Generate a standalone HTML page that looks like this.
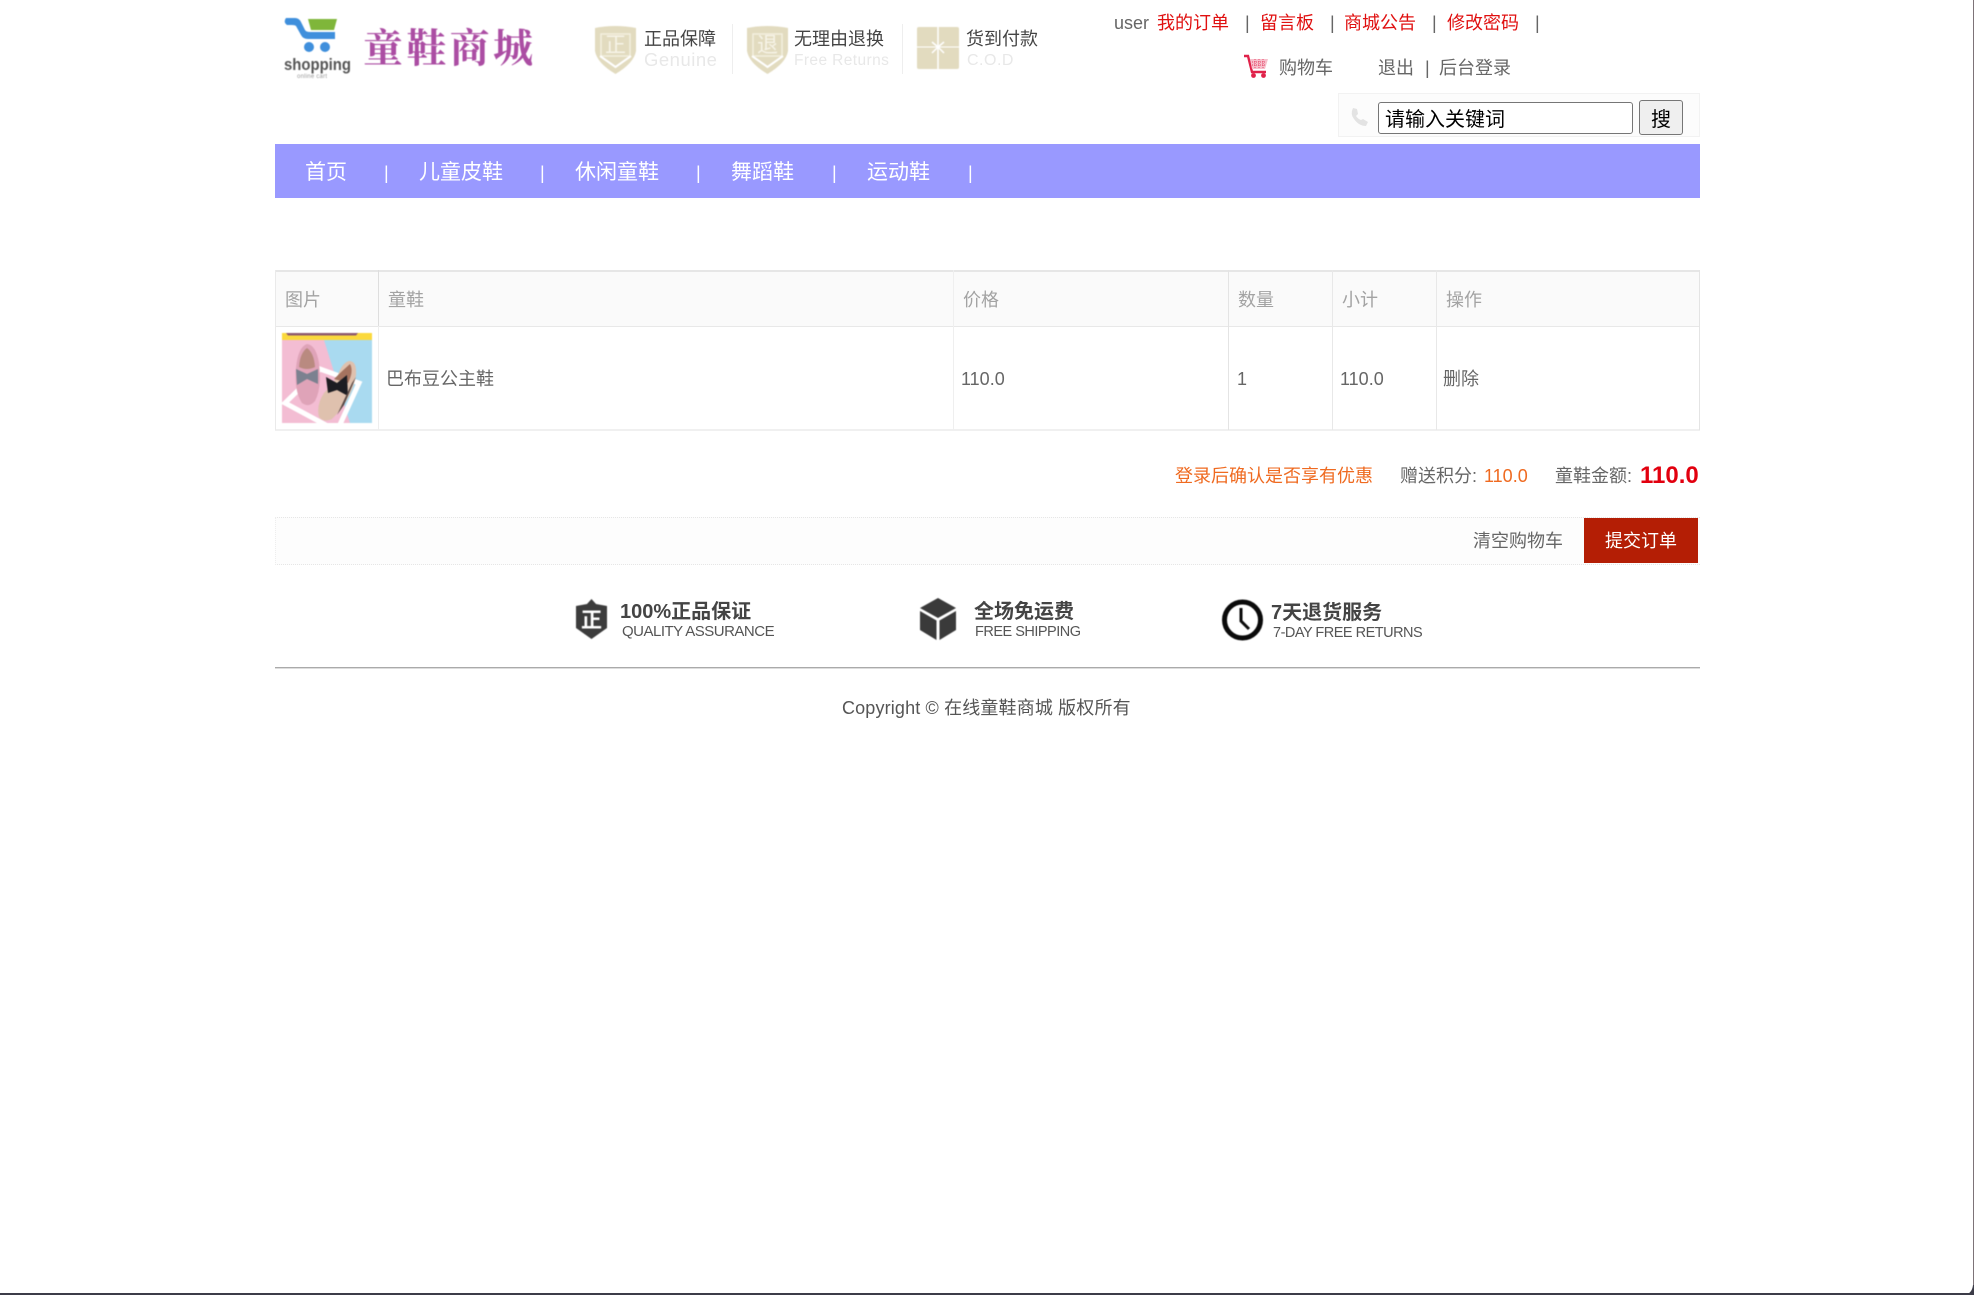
<!DOCTYPE html>
<html lang="zh-CN">
<head>
<meta charset="utf-8">
<title>童鞋商城</title>
<style>
html,body{margin:0;padding:0;background:#fff}
body{position:relative;width:1974px;height:1295px;overflow:hidden;font-family:"Liberation Sans","Noto Sans CJK SC",sans-serif;font-size:18px;color:#666}
.t{position:absolute;white-space:nowrap;line-height:24px;height:24px}
.r{color:#e01010}.w{color:#fff}.h{color:#a3a3a3}.o{color:#ef6a20}
.b{position:absolute;display:block}
svg{position:absolute;overflow:visible}
.soft{filter:blur(.4px)}
</style>
</head>
<body>
<!-- window frame -->
<div class="b" style="right:0;top:0;width:1px;height:1295px;background:#7d7378"></div>
<div class="b" style="left:0;bottom:0;width:1974px;height:2px;background:#3c3c48"></div>
<svg style="left:1960px;top:1281px" width="14" height="14" viewBox="0 0 14 14"><path d="M14 4V14H4Q12 13 13 4Z" fill="#3c3c48"/></svg>

<!-- logo -->
<svg class="soft" style="left:275px;top:5px" width="270" height="80" viewBox="0 0 270 80">
<path d="M33 14H62L59 25H36Z" fill="#7fb63a"/>
<path d="M11 13H20Q24 13 26 17L30 25Q31 27 35 27H60V34H33Q28 34 26 30L21 21Q20 20 17 20H12Q8 17 11 13Z" fill="#3f8fdc"/>
<circle cx="34" cy="42" r="5" fill="#3f8fdc"/><circle cx="50" cy="42" r="5" fill="#3f8fdc"/>
<text x="9" y="65" font-family="Liberation Sans" font-weight="700" font-size="17" fill="#555" textLength="67" lengthAdjust="spacingAndGlyphs">shopping</text>
<text x="22" y="73" font-family="Liberation Sans" font-size="6" fill="#999" textLength="30">online cart</text>
<text x="88" y="57" font-family="Noto Serif CJK SC,serif" font-weight="700" font-size="40" fill="#ab4da3" textLength="170">童鞋商城</text>
</svg>

<!-- badges -->
<svg class="soft" style="left:594px;top:25px" width="43" height="49" viewBox="0 0 43 49">
<path d="M1 3Q21-1 42 3V26Q40 38 21.500 49Q3 38 1 26Z" fill="#e2dbbf"/>
<rect x="7" y="9" width="29" height="22" fill="none" stroke="#f3efdf" stroke-width="1.500"/>
<path d="M6 31L21.500 42L37 31" fill="none" stroke="#fff" stroke-width="2"/>
<text x="21.500" y="27" text-anchor="middle" font-family="Noto Sans CJK SC" font-size="21" fill="#f7f4e8">正</text>
</svg>
<span class="t" style="left:644px;top:27px;color:#444">正品保障</span>
<span class="t" style="left:644px;top:48px;color:#e8e8e8;font-size:18.500px;letter-spacing:.5px">Genuine</span>
<div class="b" style="left:732px;top:24px;width:1px;height:50px;background:#eee"></div>

<svg class="soft" style="left:746px;top:25px" width="43" height="49" viewBox="0 0 43 49">
<path d="M1 3Q21-1 42 3V26Q40 38 21.500 49Q3 38 1 26Z" fill="#e2dbbf"/>
<rect x="7" y="9" width="29" height="22" fill="none" stroke="#f3efdf" stroke-width="1.500"/>
<path d="M6 31L21.500 42L37 31" fill="none" stroke="#fff" stroke-width="2"/>
<text x="21.500" y="27" text-anchor="middle" font-family="Noto Sans CJK SC" font-size="21" fill="#f7f4e8">退</text>
</svg>
<span class="t" style="left:794px;top:27px;color:#444">无理由退换</span>
<span class="t" style="left:794px;top:49px;color:#e8e8e8;font-size:15.500px;letter-spacing:.4px">Free Returns</span>
<div class="b" style="left:902px;top:24px;width:1px;height:50px;background:#eee"></div>

<svg class="soft" style="left:917px;top:27px" width="42" height="42" viewBox="0 0 42 42">
<rect width="42" height="42" rx="2" fill="#e2dbbf"/>
<path d="M21 0V42" stroke="#fff" stroke-width="1.500"/>
<path d="M0 20H42" stroke="#fff" stroke-width="1"/>
<path d="M21 20L15 15M21 20L27 15M21 20L15 26M21 20L27 26" stroke="#fff" stroke-width="1.500"/>
</svg>
<span class="t" style="left:966px;top:27px;color:#444">货到付款</span>
<span class="t" style="left:967px;top:49px;color:#e8e8e8;font-size:16px;letter-spacing:.5px">C.O.D</span>

<!-- top right links -->
<span class="t" style="left:1114px;top:11px">user</span>
<span class="t r" style="left:1157px;top:11px">我的订单</span>
<span class="t" style="left:1245px;top:11px">|</span>
<span class="t r" style="left:1260px;top:11px">留言板</span>
<span class="t" style="left:1330px;top:11px">|</span>
<span class="t r" style="left:1344px;top:11px">商城公告</span>
<span class="t" style="left:1432px;top:11px">|</span>
<span class="t r" style="left:1447px;top:11px">修改密码</span>
<span class="t" style="left:1535px;top:11px">|</span>

<svg style="left:1244px;top:54px" width="24" height="24" viewBox="0 0 24 24">
<path d="M0 2H4L8 18H22" fill="none" stroke="#e0224a" stroke-width="2.400"/>
<path d="M6 5H24L21 15H8Z" fill="#f7c0cc"/>
<path d="M8 8H22M8 11H22M11 5V15M15 5V15M19 5V15" stroke="#e0224a" stroke-width=".7" stroke-dasharray="1 1"/>
<circle cx="9.500" cy="21.500" r="2.400" fill="#e0224a"/><circle cx="19.500" cy="21.500" r="2.400" fill="#e0224a"/>
</svg>
<span class="t" style="left:1279px;top:56px">购物车</span>
<span class="t" style="left:1378px;top:56px">退出</span>
<span class="t" style="left:1425px;top:56px">|</span>
<span class="t" style="left:1439px;top:56px">后台登录</span>

<!-- search -->
<div class="b" style="left:1338px;top:93px;width:360px;height:42px;border:1px solid #f2f2f2;background:#fcfcfc"></div>
<svg style="left:1350px;top:108px" width="18" height="18" viewBox="0 0 18 18"><path d="M3 0L7 1L8 6L6 8Q8 11 11 12L13 11L18 14L16 18Q9 18 4 11Q0 6 3 0Z" fill="#e3e3e3"/></svg>
<div class="b" style="left:1378px;top:102px;width:253px;height:30px;border:1px solid #767676;border-radius:3px;background:#fff"></div>
<span class="t" style="left:1385px;top:108px;font-size:20px;color:#000">请输入关键词</span>
<div class="b" style="left:1639px;top:100px;width:42px;height:33px;border:1px solid #767676;border-radius:3px;background:#efefef"></div>
<span class="t" style="left:1651px;top:108px;font-size:20px;color:#000">搜</span>

<!-- nav -->
<div class="b" style="left:275px;top:144px;width:1425px;height:54px;background:#9999ff"></div>
<span class="t w" style="left:305px;top:161px;font-size:21px">首页</span>
<span class="t w" style="left:384px;top:161px;font-size:18px">|</span>
<span class="t w" style="left:419px;top:161px;font-size:21px">儿童皮鞋</span>
<span class="t w" style="left:540px;top:161px;font-size:18px">|</span>
<span class="t w" style="left:575px;top:161px;font-size:21px">休闲童鞋</span>
<span class="t w" style="left:696px;top:161px;font-size:18px">|</span>
<span class="t w" style="left:731px;top:161px;font-size:21px">舞蹈鞋</span>
<span class="t w" style="left:832px;top:161px;font-size:18px">|</span>
<span class="t w" style="left:867px;top:161px;font-size:21px">运动鞋</span>
<span class="t w" style="left:968px;top:161px;font-size:18px">|</span>

<!-- table -->
<div class="b" style="left:275px;top:271px;width:1424px;height:55px;background:#fafafa"></div>
<div class="b" style="left:275px;top:270px;width:1425px;height:2px;background:#e6e6e6"></div>
<div class="b" style="left:275px;top:326px;width:1425px;height:1px;background:#e8e8e8"></div>
<div class="b" style="left:275px;top:429px;width:1425px;height:2px;background:#f0f0f0"></div>
<div class="b" style="left:275px;top:270px;width:1px;height:160px;background:#eaeaea"></div>
<div class="b" style="left:378px;top:270px;width:1px;height:56px;background:#dedede"></div>
<div class="b" style="left:378px;top:326px;width:1px;height:104px;background:#eee"></div>
<div class="b" style="left:953px;top:270px;width:1px;height:160px;background:#efefef"></div>
<div class="b" style="left:1228px;top:270px;width:1px;height:160px;background:#e4e4e4"></div>
<div class="b" style="left:1332px;top:270px;width:1px;height:160px;background:#e8e8e8"></div>
<div class="b" style="left:1436px;top:270px;width:1px;height:160px;background:#e8e8e8"></div>
<div class="b" style="left:1699px;top:270px;width:1px;height:160px;background:#e4e4e4"></div>

<span class="t h" style="left:285px;top:288px">图片</span>
<span class="t h" style="left:388px;top:288px">童鞋</span>
<span class="t h" style="left:963px;top:288px">价格</span>
<span class="t h" style="left:1238px;top:288px">数量</span>
<span class="t h" style="left:1342px;top:288px">小计</span>
<span class="t h" style="left:1446px;top:288px">操作</span>

<!-- product image -->
<svg class="soft" style="left:282px;top:333px" width="90" height="90" viewBox="0 0 90 90">
<defs><clipPath id="c"><rect width="90" height="90"/></clipPath></defs>
<g clip-path="url(#c)">
<rect width="90" height="90" fill="#a9daf0"/>
<path d="M0 7H42L68 90H0Z" fill="#f3bdd3"/>
<rect width="90" height="7" fill="#fbd93c"/>
<path d="M4 0H76L74 2.500H6Z" fill="#8f5a6e"/>
<path d="M3 70L38 36L77 50L55 98Z" fill="none" stroke="#fff" stroke-width="5"/>
<path d="M25 11Q34 12 37 30Q40 55 33 68Q27 75 20 70Q12 58 14 35Q16 14 25 11Z" fill="#dfa3b8"/>
<path d="M25 15Q32 20 33 34Q25 38 17 34Q18 20 25 15Z" fill="#b98a80"/>
<path d="M14 36L25 41L36 36L36 51L25 46L15 52Z" fill="#7c8190"/>
<path d="M67 28Q75 28 74 42Q70 66 50 86Q42 90 37 84Q34 72 42 60Q52 50 56 42Q60 30 67 28Z" fill="#dfc1ae"/>
<path d="M68 31Q72 38 66 50L52 46Q60 38 68 31Z" fill="#a5735f"/>
<path d="M44 44L55 50L65 42L66 63L55 57L46 60Z" fill="#1d1d22"/>
<path d="M74 44L62 72L55 82L70 50Z" fill="#5a4a46"/>
</g>
</svg>

<span class="t" style="left:386px;top:367px">巴布豆公主鞋</span>
<span class="t" style="left:961px;top:367px">110.0</span>
<span class="t" style="left:1237px;top:367px">1</span>
<span class="t" style="left:1340px;top:367px">110.0</span>
<span class="t" style="left:1443px;top:367px">删除</span>

<!-- totals -->
<span class="t o" style="left:1175px;top:464px">登录后确认是否享有优惠</span>
<span class="t" style="left:1400px;top:464px">赠送积分:</span>
<span class="t o" style="left:1484px;top:464px">110.0</span>
<span class="t" style="left:1555px;top:464px">童鞋金额:</span>
<span class="t" style="left:1640px;top:464px;font-size:24px;font-weight:700;color:#e2000f">110.0</span>

<!-- action bar -->
<div class="b" style="left:275px;top:517px;width:1424px;height:46px;border-top:1px dotted #e6e6e6;border-bottom:1px dotted #e6e6e6;border-left:1px dotted #eee;background:#fdfdfd"></div>
<span class="t" style="left:1473px;top:529px">清空购物车</span>
<div class="b" style="left:1584px;top:518px;width:114px;height:45px;background:#b41e05"></div>
<span class="t w" style="left:1605px;top:529px">提交订单</span>

<!-- service badges -->
<svg class="soft" style="left:576px;top:599px" width="31" height="40" viewBox="0 0 31 40">
<path d="M15.500 0L20 5L31 7V29L15.500 40L0 29V7L11 5Z" fill="#3c3c3c"/>
<text x="15.500" y="28" text-anchor="middle" font-family="Noto Sans CJK SC" font-weight="700" font-size="21" fill="#fff">正</text>
</svg>
<span class="t" style="left:620px;top:600px;font-size:20px;font-weight:700;color:#444">100%正品保证</span>
<span class="t" style="left:622px;top:620px;font-size:15px;color:#555;letter-spacing:-.5px">QUALITY ASSURANCE</span>

<svg class="soft" style="left:920px;top:598px" width="36" height="42" viewBox="0 0 36 42">
<path d="M18 0L36 10L18 20L0 10Z" fill="#3a3a3a"/>
<path d="M0 13L16.500 22.500V42L0 32Z" fill="#3a3a3a"/>
<path d="M36 13L19.500 22.500V42L36 32Z" fill="#3a3a3a"/>
</svg>
<span class="t" style="left:974px;top:600px;font-size:20px;font-weight:700;color:#444">全场免运费</span>
<span class="t" style="left:975px;top:620px;font-size:14.500px;color:#555;letter-spacing:-.5px">FREE SHIPPING</span>

<svg class="soft" style="left:1222px;top:599px" width="41" height="42" viewBox="0 0 41 42">
<circle cx="20.500" cy="21" r="18" fill="none" stroke="#0a0a0a" stroke-width="5"/>
<path d="M19 9V22L27 30" fill="none" stroke="#0a0a0a" stroke-width="3"/>
</svg>
<span class="t" style="left:1271px;top:601px;font-size:20px;font-weight:700;color:#444">7天退货服务</span>
<span class="t" style="left:1273px;top:621px;font-size:14.500px;color:#555;letter-spacing:-.5px">7-DAY FREE RETURNS</span>

<!-- footer -->
<div class="b" style="left:275px;top:667px;width:1425px;height:1px;background:#aaa"></div>
<div class="b" style="left:275px;top:668px;width:1425px;height:1px;background:#ddd"></div>
<span class="t" style="left:842px;top:696px;color:#555;letter-spacing:.15px">Copyright © 在线童鞋商城 版权所有</span>
</body>
</html>
